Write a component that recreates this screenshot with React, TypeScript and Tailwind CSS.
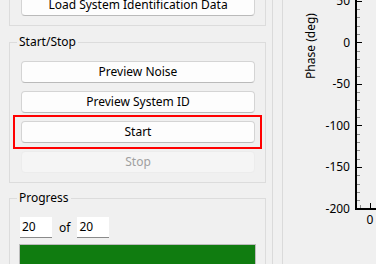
import React from 'react';

const yOf = (v: number) => 42.3 - v * 0.831;

const majors = [50, 0, -50, -100, -150, -200];
const minors: number[] = [];
for (let v = 50; v > -200; v -= 10) {
  if (v % 50 !== 0) minors.push(v);
}

const Button = ({ label, disabled = false }: { label: string; disabled?: boolean }) => (
  <button
    disabled={disabled}
    className={`h-[22px] w-full rounded-[4px] border text-[12px] leading-none ${
      disabled
        ? 'bg-[#f5f5f5] border-[#ececec] text-[#a0a0a0]'
        : 'bg-[#fdfdfd] border-[#d4d4d4] border-b-[#bababa] text-black'
    }`}
  >
    {label}
  </button>
);

const SpinBox = ({ value }: { value: number }) => (
  <div className="h-[21px] w-[32px] bg-white border-b border-[#8a8a8a] pl-[2px] flex items-center text-[12px] text-black">
    {value}
  </div>
);

const PhasePlot = () => (
  <svg width={93} height={264} shapeRendering="crispEdges" className="shrink-0">
    <g transform="translate(-283 0)" fontSize={12} fill="#000">
      <text
        x={310}
        y={46}
        transform="rotate(-90 310 46)"
        textAnchor="middle"
        dominantBaseline="central"
      >
        Phase (deg)
      </text>
      {majors.map((v) => (
        <text key={v} x={350} y={yOf(v)} textAnchor="end" dominantBaseline="central">
          {v}
        </text>
      ))}
      {minors.map((v) => (
        <rect key={v} x={357} y={Math.round(yOf(v))} width={3} height={1} fill="#8c8c8c" />
      ))}
      {majors.map((v) => (
        <rect key={'t' + v} x={357} y={Math.round(yOf(v))} width={5} height={1} fill="#000" />
      ))}
      <rect x={355} y={0} width={2} height={210} fill="#000" />
      <rect x={355} y={208} width={21} height={2} fill="#000" />
      <rect x={360} y={205} width={1} height={3} fill="#8c8c8c" />
      <rect x={370} y={203} width={1} height={5} fill="#000" />
      <text x={370} y={219} textAnchor="middle" dominantBaseline="central">
        0
      </text>
    </g>
  </svg>
);

export default function App() {
  return (
    <div className="w-[376px] h-[264px] overflow-hidden bg-[#f0f0f0] flex font-['Noto_Sans',sans-serif] text-[12px] text-black">
      {/* left control column */}
      <div className="w-[272px] shrink-0 pl-[9px] pr-[6px] -mt-[6px] flex flex-col">
        <div className="border-x border-b border-[#dcdcdc] pl-[11px] pr-[10px] pb-[9px]">
          <Button label="Load System Identification Data" />
        </div>

        <fieldset className="mt-[8px] border border-[#dcdcdc]">
          <legend className="ml-[7px] px-[2px] leading-[16px]">Start/Stop</legend>
          <div className="pt-[11px] pl-[11px] pr-[10px] pb-[9px] flex flex-col gap-[8px]">
            <Button label="Preview Noise" />
            <Button label="Preview System ID" />
            <div className="relative">
              <Button label="Start" />
              <div className="absolute -left-[8px] -right-[7px] -top-[6px] -bottom-[6px] border-2 border-[#ff0000] pointer-events-none" />
            </div>
            <Button label="Stop" disabled />
          </div>
        </fieldset>

        <fieldset className="mt-[7px] border border-[#dcdcdc]">
          <legend className="ml-[7px] px-[2px] leading-[16px]">Progress</legend>
          <div className="pt-[11px] px-[9px] pb-[9px] flex flex-col gap-[6px]">
            <div className="flex items-center pl-[1px]">
              <SpinBox value={20} />
              <span className="mx-[7px]">of</span>
              <SpinBox value={20} />
            </div>
            <div className="h-[40px] border border-[#bcbcbc] bg-[#107c10]" />
          </div>
        </fieldset>
      </div>

      {/* splitter */}
      <div className="w-[11px] shrink-0 border-x border-[#dadada]" />

      {/* phase plot */}
      <PhasePlot />
    </div>
  );
}
